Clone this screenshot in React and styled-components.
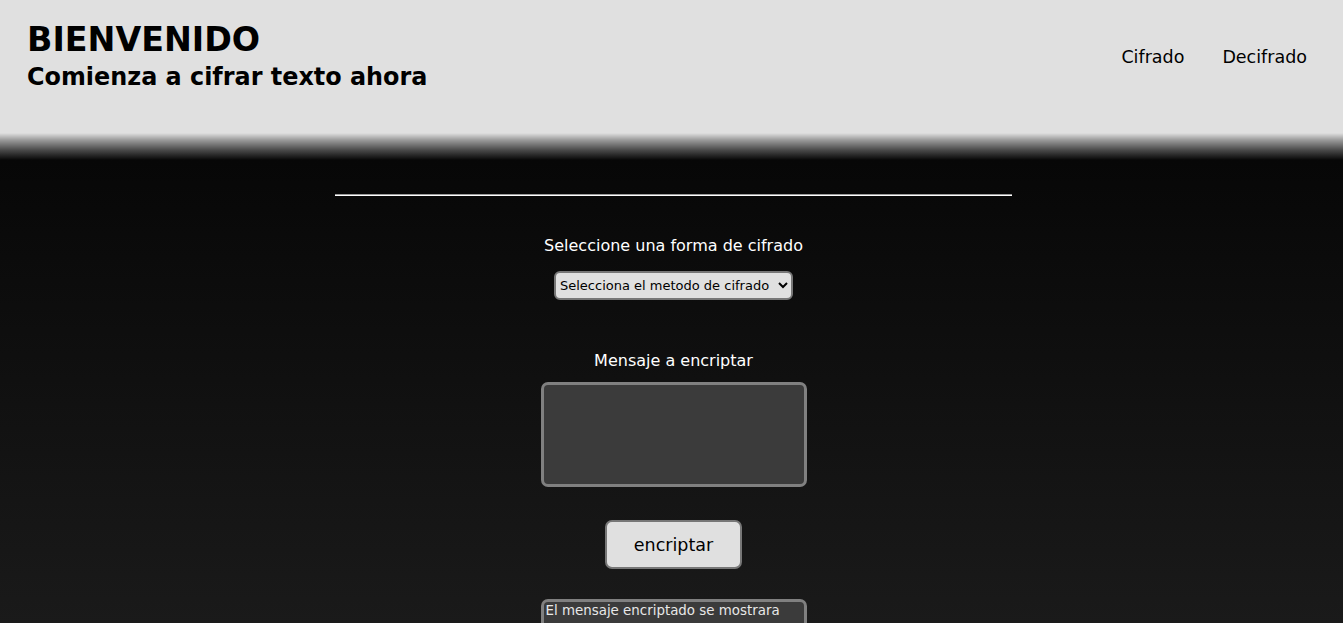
import React from "react";
import styled, { createGlobalStyle } from "styled-components";

const GlobalStyle = createGlobalStyle`
  html, body {
    margin: 0;
    padding: 0;
  }
  body {
    font-family: "DejaVu Sans", Verdana, sans-serif;
    background: linear-gradient(to bottom, #070707 160px, #1a1a1a 623px);
    min-height: 623px;
    overflow: hidden;
  }
`;

const Header = styled.header`
  height: 160px;
  display: flex;
  justify-content: space-between;
  align-items: flex-start;
  padding: 0 36px 0 27px;
  box-sizing: border-box;
  background: linear-gradient(
    to bottom,
    #e0e0e0 0,
    #e0e0e0 133px,
    #9a9a9a 140px,
    #4a4a4a 150px,
    #070707 160px
  );
`;

const TitleBlock = styled.div`
  padding-top: 20px;
`;

const Title = styled.h1`
  margin: 0;
  font-size: 33.3px;
  line-height: 40px;
  font-weight: bold;
  color: #000;
`;

const Subtitle = styled.h2`
  margin: 0;
  font-size: 23.9px;
  line-height: 34px;
  font-weight: bold;
  color: #000;
`;

const Nav = styled.nav`
  display: flex;
  gap: 38px;
  padding-top: 47px;
`;

const NavLink = styled.a`
  font-size: 17.5px;
  color: #000;
  text-decoration: none;
`;

const Main = styled.main`
  display: flex;
  flex-direction: column;
  align-items: center;
  padding-left: 4px;
`;

const Divider = styled.hr`
  width: 677px;
  margin: 34px 0 0;
  border: none;
  border-top: 1px solid #9a9a9a;
  border-bottom: 1px solid #ffffff;
`;

const Label = styled.label`
  color: #fff;
  font-size: 16px;
  margin-top: ${(p) => p.$top}px;
  line-height: 20px;
`;

const Select = styled.select`
  margin-top: 15px;
  height: 29px;
  width: 239px;
  background: #e0e0e0;
  border: 2px solid #777;
  border-radius: 6px;
  font-family: "DejaVu Sans", Verdana, sans-serif;
  font-size: 13px;
  color: #000;
  padding: 0;
`;

const TextArea = styled.textarea`
  margin-top: ${(p) => p.$top}px;
  width: 266px;
  height: ${(p) => p.$h}px;
  box-sizing: border-box;
  background: #3b3b3b;
  border: 3px solid #808080;
  border-radius: 7px;
  color: #e8e8e8;
  font-family: "DejaVu Sans", Verdana, sans-serif;
  font-size: 13.4px;
  padding: 1px 2px;
  resize: none;
  outline: none;
`;

const Button = styled.button`
  margin-top: 33px;
  width: 137px;
  height: 49px;
  background: #e0e0e0;
  border: 2px solid #777;
  border-radius: 7px;
  font-family: "DejaVu Sans", Verdana, sans-serif;
  font-size: 17.5px;
  color: #000;
  cursor: pointer;
`;

export default function App() {
  return (
    <>
      <GlobalStyle />
      <Header>
        <TitleBlock>
          <Title>BIENVENIDO</Title>
          <Subtitle>Comienza a cifrar texto ahora</Subtitle>
        </TitleBlock>
        <Nav>
          <NavLink href="#">Cifrado</NavLink>
          <NavLink href="#">Decifrado</NavLink>
        </Nav>
      </Header>
      <Main>
        <Divider />
        <Label $top={40}>Seleccione una forma de cifrado</Label>
        <Select defaultValue="">
          <option value="">Selecciona el metodo de cifrado</option>
          <option value="cesar">Cesar</option>
          <option value="vigenere">Vigenere</option>
        </Select>
        <Label $top={51}>Mensaje a encriptar</Label>
        <TextArea $top={11} $h={105} />
        <Button>encriptar</Button>
        <TextArea
          $top={30}
          $h={90}
          readOnly
          value="El mensaje encriptado se mostrara"
        />
      </Main>
    </>
  );
}
